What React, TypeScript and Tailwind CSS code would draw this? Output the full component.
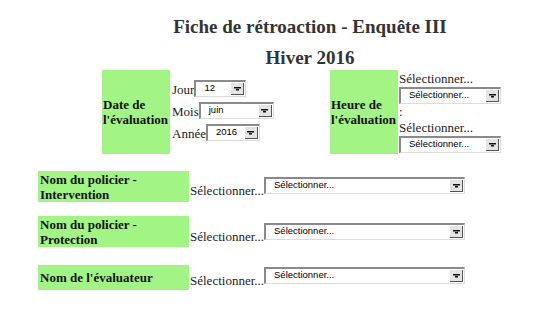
import React from "react";

const serif = { fontFamily: '"Liberation Serif", "Times New Roman", serif' };

function Select({ value, w }: { value: string; w: number }) {
  return (
    <div
      className="flex h-[17px] shrink-0 items-stretch border-t-2 border-l-2 border-t-[#8a8a8a] border-l-[#8a8a8a] border-b border-r border-b-[#dcdcdc] border-r-[#dcdcdc] bg-white"
      style={{ width: w }}
    >
      <span className="flex-1 truncate pl-[8px] text-[9.5px] leading-[12px] text-black [font-family:'Liberation_Sans',Arial,sans-serif]">
        {value}
      </span>
      <span className="m-[1px] flex w-[13px] items-center justify-center border-b border-r border-b-[#555] border-r-[#555] bg-[#e4e4e4]">
        <svg width="7" height="4" viewBox="0 0 7 4">
          <rect x="0" y="0" width="7" height="1.5" fill="#111" />
          <rect x="2" y="2" width="3" height="1.5" fill="#111" />
        </svg>
      </span>
    </div>
  );
}

function Label({ children, className = "" }: { children: React.ReactNode; className?: string }) {
  return (
    <div className={`flex shrink-0 items-center bg-[#a2f585] text-[13px] font-bold leading-[15px] text-[#111] ${className}`}>
      {children}
    </div>
  );
}

function NameRow({ label, h, mt, selTop }: { label: React.ReactNode; h: string; mt: string; selTop: string }) {
  return (
    <div className={`flex items-start ${mt}`}>
      <Label className={`w-[151px] pl-[2px] ${h}`}>{label}</Label>
      <div className={`ml-[1px] flex items-end ${selTop}`}>
        <span className="text-[13px] leading-[15px] text-[#222]">Sélectionner...</span>
        <div className="mb-[4px]">
          <Select value="Sélectionner..." w={201} />
        </div>
      </div>
    </div>
  );
}

export default function App() {
  return (
    <div className="h-[320px] w-[542px] overflow-hidden bg-white text-[#222]" style={serif}>
      <div className="ml-[78px] w-[464px] pt-[14px] text-center">
        <h1 className="text-[19px] font-bold leading-[26px] text-[#333]">Fiche de rétroaction - Enquête III</h1>
        <h2 className="mt-[6px] text-[19px] font-bold leading-[24px] text-[#333]">Hiver 2016</h2>
      </div>

      <div className="ml-[102px] flex items-start">
        <Label className="h-[84px] w-[68px]">
          <span className="pl-[1px]">Date de<br />l'évaluation</span>
        </Label>
        <div className="ml-[2px] flex w-[158px] flex-col pt-[10px]">
          <div className="flex items-end">
            <span className="text-[13px] leading-[15px]">Jour</span>
            <Select value="12" w={52} />
          </div>
          <div className="mt-[5px] flex items-end">
            <span className="text-[13px] leading-[15px]">Mois</span>
            <Select value="juin" w={75} />
          </div>
          <div className="mt-[5px] flex items-end">
            <span className="text-[13px] leading-[15px]">Année</span>
            <Select value="2016" w={54} />
          </div>
        </div>

        <Label className="h-[84px] w-[68px]">
          <span className="pl-[1px]">Heure de<br />l'évaluation</span>
        </Label>
        <div className="ml-[1px] flex flex-col">
          <span className="text-[13px] leading-[17px]">Sélectionner...</span>
          <Select value="Sélectionner..." w={102} />
          <span className="text-[13px] leading-[15px]">:</span>
          <span className="text-[13px] leading-[17px]">Sélectionner...</span>
          <Select value="Sélectionner..." w={102} />
        </div>
      </div>

      <div className="ml-[38px] flex flex-col">
        <NameRow label={<>Nom du policier -<br />Intervention</>} h="h-[31px]" mt="mt-[17px]" selTop="mt-[6px]" />
        <NameRow label={<>Nom du policier -<br />Protection</>} h="h-[31px]" mt="mt-[14px]" selTop="mt-[7px]" />
        <NameRow label="Nom de l'évaluateur" h="h-[25px]" mt="mt-[18px]" selTop="mt-[2px]" />
      </div>
    </div>
  );
}
